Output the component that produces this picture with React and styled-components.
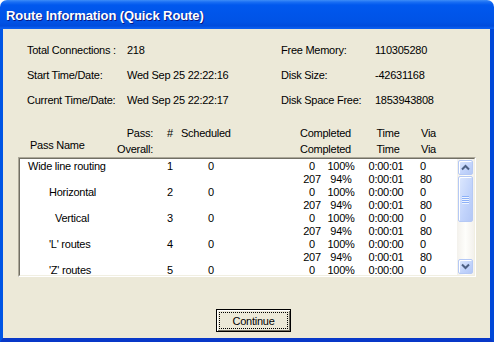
import React from "react";
import styled, { createGlobalStyle } from "styled-components";

const Global = createGlobalStyle`
  html, body { margin: 0; padding: 0; background: #ffffff; }
  body { font-family: "Liberation Sans", Arial, sans-serif; }
`;

const COLS = "90px 50px 20px 62px 56px 28px 30px 60px 41px";

const Window = styled.div`
  width: 494px;
  height: 342px;
  display: flex;
  flex-direction: column;
  overflow: hidden;
`;

const TitleBar = styled.div`
  height: 29px;
  flex: none;
  display: flex;
  align-items: center;
  padding-left: 6px;
  border-radius: 7px 7px 0 0;
  background: linear-gradient(
    to bottom,
    #3d8df7 0px,
    #1a6ff4 2px,
    #0058ee 5px,
    #0055ea 14px,
    #0053e6 22px,
    #004cdc 26px,
    #0a5ef0 28px,
    #0a5ef0 29px
  );
`;

const Title = styled.span`
  color: #ffffff;
  font-weight: bold;
  font-size: 13px;
  letter-spacing: -0.1px;
  text-shadow: 1px 1px 0 #0a1883;
  margin-top: 1px;
`;

const Body = styled.div`
  flex: 1;
  display: flex;
  flex-direction: column;
  background: #ece9d8;
  border-left: 3px solid #0055e5;
  border-right: 4px solid #0048d8;
  border-bottom: 4px solid #0838c8;
  padding-top: 15px;
  font-size: 11px;
  letter-spacing: -0.25px;
  color: #000000;
  line-height: 13px;
`;

const InfoArea = styled.div`
  display: flex;
  padding-left: 24px;
`;

const InfoGroup = styled.div`
  display: grid;
  grid-template-columns: ${(p) => p.$label}px auto;
  row-gap: 12px;
  width: ${(p) => p.$width}px;
`;

const Label = styled.span`
  white-space: nowrap;
`;

const Value = styled.span`
  white-space: nowrap;
`;

const Header = styled.div`
  display: grid;
  grid-template-columns: ${COLS};
  grid-template-rows: 13px 13px;
  row-gap: 3px;
  margin-top: 20px;
  margin-left: 17px;
`;

const HeadCell = styled.span`
  grid-column: ${(p) => p.$col};
  grid-row: ${(p) => p.$row || 1};
  text-align: ${(p) => p.$align || "left"};
  padding-left: ${(p) => p.$pl || 0}px;
  padding-right: ${(p) => p.$pr || 0}px;
  align-self: ${(p) => p.$self || "start"};
  margin-bottom: ${(p) => p.$mb || 0}px;
  white-space: nowrap;
`;

const ListBox = styled.div`
  margin-top: 1px;
  margin-left: 15px;
  width: 458px;
  height: 120px;
  box-sizing: border-box;
  border-style: solid;
  border-width: 1px;
  border-color: #aca899 #ffffff #ffffff #aca899;
  display: flex;
`;

const ListInner = styled.div`
  flex: 1;
  display: flex;
  background: #ffffff;
  border-style: solid;
  border-width: 1px;
  border-color: #716f64 #f1efe2 #f1efe2 #716f64;
  overflow: hidden;
`;

const Rows = styled.div`
  flex: 1;
  padding-top: 1px;
  overflow: hidden;
`;

const Row = styled.div`
  display: grid;
  grid-template-columns: ${COLS};
  grid-template-rows: 13px 13px;
`;

const Cell = styled.span`
  grid-column: ${(p) => p.$col};
  grid-row: ${(p) => p.$row || 1};
  text-align: ${(p) => p.$align || "center"};
  padding-left: ${(p) => p.$pl || 0}px;
  white-space: nowrap;
`;

const ScrollBar = styled.div`
  width: 17px;
  flex: none;
  box-sizing: border-box;
  padding: 1px;
  display: flex;
  flex-direction: column;
  gap: 1px;
  background: linear-gradient(to right, #f3f1ec, #fefefb 50%, #f3f1ec);
`;

const ScrollButton = styled.div`
  height: 15px;
  flex: none;
  box-sizing: border-box;
  border: 1px solid #b5c9f5;
  border-radius: 2px;
  background: linear-gradient(to bottom right, #dde8fe, #c1d3fb 60%, #b4c8f6);
  display: flex;
  align-items: center;
  justify-content: center;
  box-shadow: inset 1px 1px 0 #ffffff;
`;

const Thumb = styled(ScrollButton)`
  height: 46px;
  flex-direction: column;
  gap: 1px;
`;

const Grip = styled.span`
  width: 7px;
  height: 1px;
  background: #8cb0f8;
  box-shadow: 0 1px 0 #eef4fe;
`;

const Track = styled.div`
  flex: 1;
`;

const ButtonRow = styled.div`
  margin-top: 32px;
  padding-left: 213px;
  display: flex;
`;

const Button = styled.button`
  width: 75px;
  height: 23px;
  padding: 2px;
  box-sizing: border-box;
  background: #ece9d8;
  border: 1px solid #000000;
  box-shadow: inset 1px 1px 0 #ffffff, inset -1px -1px 0 #716f64;
  font-family: "Liberation Sans", Arial, sans-serif;
  font-size: 11px;
  letter-spacing: -0.25px;
  color: #000000;
  display: flex;
`;

const Focus = styled.span`
  flex: 1;
  border: 1px dotted #000000;
  display: flex;
  align-items: center;
  justify-content: center;
`;

function Chevron({ up }) {
  return (
    <svg width="9" height="7" viewBox="0 0 9 7">
      <path
        d={up ? "M1 5.5 L4.5 2 L8 5.5" : "M1 1.5 L4.5 5 L8 1.5"}
        fill="none"
        stroke="#4d6185"
        strokeWidth="2"
      />
    </svg>
  );
}

const info = {
  left: [
    ["Total Connections :", "218"],
    ["Start Time/Date:", "Wed Sep 25 22:22:16"],
    ["Current Time/Date:", "Wed Sep 25 22:22:17"],
  ],
  right: [
    ["Free Memory:", "110305280"],
    ["Disk Size:", "-42631168"],
    ["Disk Space Free:", "1853943808"],
  ],
};

// last row's overall line is scrolled out of view in the list
const passes = [
  { name: "Wide line routing", indent: 8, n: 1, first: ["0", "100%", "0:00:01", "0"], more: true },
  { name: "Horizontal", indent: 29, n: 2, first: ["0", "100%", "0:00:00", "0"], more: true },
  { name: "Vertical", indent: 35, n: 3, first: ["0", "100%", "0:00:00", "0"], more: true },
  { name: "'L' routes", indent: 29, n: 4, first: ["0", "100%", "0:00:00", "0"], more: true },
  { name: "'Z' routes", indent: 29, n: 5, first: ["0", "100%", "0:00:00", "0"], more: false },
];
const overall = ["207", "94%", "0:00:01", "80"];

function Completed({ vals, row }) {
  return (
    <>
      <Cell $col={6} $row={row}>{vals[0]}</Cell>
      <Cell $col={7} $row={row}>{vals[1]}</Cell>
      <Cell $col={8} $row={row}>{vals[2]}</Cell>
      <Cell $col={9} $row={row} $align="left" $pl={4}>{vals[3]}</Cell>
    </>
  );
}

export default function App() {
  return (
    <Window>
      <Global />
      <TitleBar>
        <Title>Route Information (Quick Route)</Title>
      </TitleBar>
      <Body>
        <InfoArea>
          <InfoGroup $label={100} $width={254}>
            {info.left.map(([l, v]) => (
              <React.Fragment key={l}>
                <Label>{l}</Label>
                <Value>{v}</Value>
              </React.Fragment>
            ))}
          </InfoGroup>
          <InfoGroup $label={94} $width={180}>
            {info.right.map(([l, v]) => (
              <React.Fragment key={l}>
                <Label>{l}</Label>
                <Value>{v}</Value>
              </React.Fragment>
            ))}
          </InfoGroup>
        </InfoArea>

        <Header>
          <HeadCell $col="1" $row="1 / 3" $pl={10} $self="end" $mb={4}>Pass Name</HeadCell>
          <HeadCell $col="2" $align="right" $pr={7}>Pass:</HeadCell>
          <HeadCell $col="2" $row={2} $align="right" $pr={7}>Overall:</HeadCell>
          <HeadCell $col="3" $align="center">#</HeadCell>
          <HeadCell $col="4" $pl={1}>Scheduled</HeadCell>
          <HeadCell $col="6 / 8" $pl={2}>Completed</HeadCell>
          <HeadCell $col="6 / 8" $row={2} $pl={2}>Completed</HeadCell>
          <HeadCell $col="8" $align="center" $pl={4}>Time</HeadCell>
          <HeadCell $col="8" $row={2} $align="center" $pl={4}>Time</HeadCell>
          <HeadCell $col="9" $pl={5}>Via</HeadCell>
          <HeadCell $col="9" $row={2} $pl={5}>Via</HeadCell>
        </Header>

        <ListBox>
          <ListInner>
            <Rows>
              {passes.map((p) => (
                <Row key={p.n}>
                  <Cell $col="1 / 3" $align="left" $pl={p.indent}>{p.name}</Cell>
                  <Cell $col={3}>{p.n}</Cell>
                  <Cell $col={4}>0</Cell>
                  <Completed vals={p.first} row={1} />
                  {p.more && <Completed vals={overall} row={2} />}
                </Row>
              ))}
            </Rows>
            <ScrollBar>
              <ScrollButton><Chevron up /></ScrollButton>
              <Thumb>
                <Grip />
                <Grip />
                <Grip />
                <Grip />
              </Thumb>
              <Track />
              <ScrollButton><Chevron /></ScrollButton>
            </ScrollBar>
          </ListInner>
        </ListBox>

        <ButtonRow>
          <Button>
            <Focus>Continue</Focus>
          </Button>
        </ButtonRow>
      </Body>
    </Window>
  );
}
